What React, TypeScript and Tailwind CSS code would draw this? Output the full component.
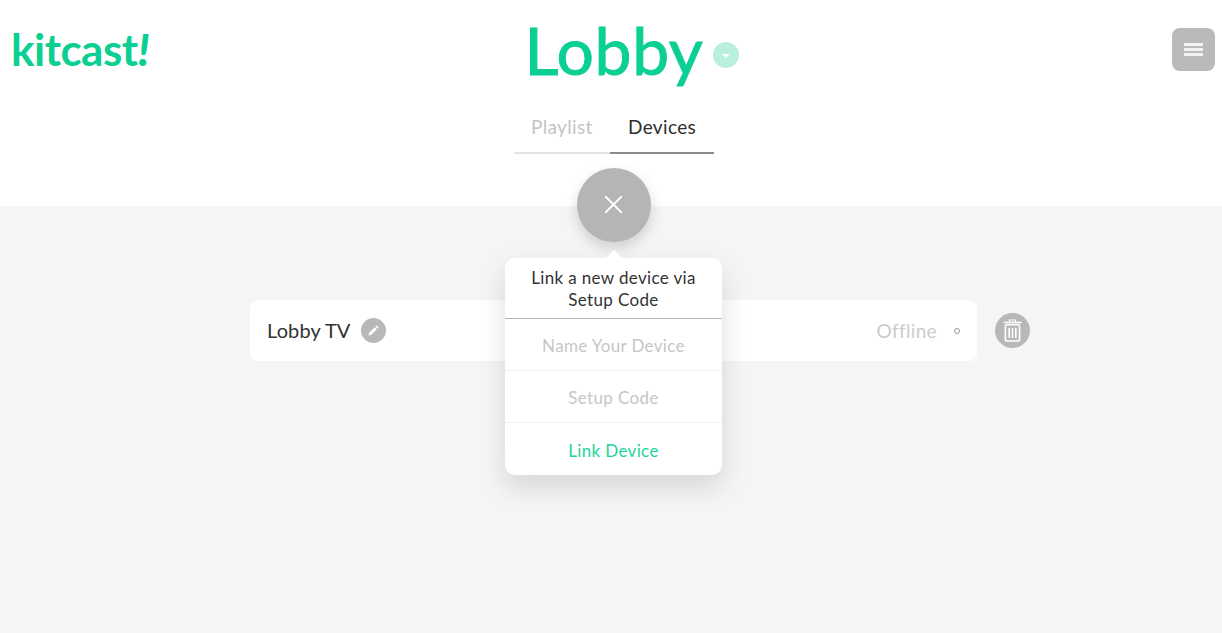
import { X } from 'lucide-react';

const font = { fontFamily: '"Lato", "Liberation Sans", sans-serif' };

function PencilIcon() {
  return (
    <svg width="13" height="13" viewBox="0 0 13 13" fill="white">
      <path d="M9.6 1.4 11.6 3.4 10.5 4.5 8.5 2.5Z" />
      <path d="M7.8 3.2 9.8 5.2 4 11 1.4 11.6 2 9Z" />
    </svg>
  );
}

function TrashIcon() {
  return (
    <svg width="21" height="25" viewBox="0 0 21 25" fill="none" stroke="white">
      <path d="M1.5 4.5h18" strokeWidth="1.6" />
      <path d="M7.5 4V2h6v2" strokeWidth="1.2" />
      <rect x="3.4" y="6.8" width="14.2" height="16.2" rx="1.5" strokeWidth="1.6" />
      <path d="M7.2 10v10M10.5 10v10M13.8 10v10" strokeWidth="1.6" />
    </svg>
  );
}

function PopoverRow({ label, className }: { label: string; className: string }) {
  return (
    <div className={`flex h-[52px] items-center justify-center pt-[3px] text-[17px] tracking-[0.35px] ${className}`}>
      {label}
    </div>
  );
}

export default function App() {
  return (
    <div className="relative flex h-[633px] flex-col overflow-hidden bg-white" style={font}>
      <header className="relative h-[206px] shrink-0 bg-white">
        <div className="flex items-start justify-between pl-[11px] pr-[7px]">
          <div className="mt-[21px] text-[44px] leading-[56px] font-bold tracking-[-0.5px] text-[#0bcf93]">
            kitcast<span className="font-black italic">!</span>
          </div>
          <button className="mt-[28px] flex h-[43px] w-[43px] flex-col items-center justify-center gap-[2.5px] rounded-lg bg-[#bababa]">
            <span className="h-[2.5px] w-[19px] bg-[#f2f2f2]" />
            <span className="h-[2.5px] w-[19px] bg-[#f2f2f2]" />
            <span className="h-[2.5px] w-[19px] bg-[#f2f2f2]" />
          </button>
        </div>
        <div className="absolute top-[10px] left-[514px] flex w-[200px] flex-col items-center">
          <div className="relative text-[66px] leading-[80px] font-normal tracking-[0.6px] text-[#0bcf93] [-webkit-text-stroke:1px_#0bcf93]">
            Lobby
            <span className="absolute top-[32px] left-[calc(100%+9px)] flex h-[26px] w-[26px] items-center justify-center rounded-full bg-[#b9f0dd]">
              <span className="mt-[1px] h-0 w-0 border-x-[4px] border-t-[4px] border-x-transparent border-t-white" />
            </span>
          </div>
          <div className="mt-[25px] flex w-full text-[19px] leading-[24px] tracking-[0.35px]">
            <div className="w-[96px] border-b-2 border-[#e3e3e3] pb-[13px] pl-[17px] text-[#c4c4c4]">Playlist</div>
            <div className="flex-1 border-b-2 border-[#8a8a8a] pb-[13px] pl-[18px] text-[#2e2e2e]">Devices</div>
          </div>
        </div>
      </header>

      <main className="flex-1 bg-[#f5f5f5] pt-[94px] pl-[250px]">
        <div className="flex items-center gap-[18px]">
          <div className="flex h-[61px] w-[727px] items-center justify-between rounded-lg bg-white pr-[17px] pl-[17px]">
            <div className="flex items-center gap-[10px] text-[20px] leading-[26px] tracking-[0.1px] text-[#333333]">
              <span className="-mt-[1px]">Lobby TV</span>
              <span className="flex h-[25px] w-[25px] items-center justify-center rounded-full bg-[#b8b8b8]">
                <PencilIcon />
              </span>
            </div>
            <div className="flex items-center gap-[17px] text-[19px] tracking-[0.35px] text-[#cccccc]">
              <span className="mt-[1px]">Offline</span>
              <span className="h-[6px] w-[6px] rounded-full border border-[#999999]" />
            </div>
          </div>
          <span className="flex h-[35px] w-[35px] items-center justify-center rounded-full bg-[#b8b8b8]">
            <TrashIcon />
          </span>
        </div>
      </main>

      <button className="absolute top-[168px] left-[577px] flex h-[74px] w-[74px] items-center justify-center rounded-full bg-[#b5b5b5] pb-[2px] pr-[1px] shadow-[0_6px_14px_rgba(0,0,0,0.16)]">
        <X size={31} color="white" strokeWidth={1.4} />
      </button>

      <div className="absolute top-[258px] left-[505px] w-[217px] rounded-[10px] bg-white shadow-[0_12px_28px_rgba(0,0,0,0.13)]">
        <div className="absolute -top-[8px] left-[100px] h-0 w-0 border-x-[9px] border-b-[9px] border-x-transparent border-b-white" />
        <div className="flex h-[61px] items-center justify-center border-b border-[#b4b4b4] pt-[2px] text-center text-[17px] leading-[22px] tracking-[0.35px] text-[#333333]">
          Link a new device via
          <br />
          Setup Code
        </div>
        <PopoverRow label="Name Your Device" className="border-b border-[#f0f0f0] text-[#c6c6c6]" />
        <PopoverRow label="Setup Code" className="border-b border-[#f0f0f0] text-[#c6c6c6]" />
        <PopoverRow label="Link Device" className="text-[#1fd49c]" />
      </div>
    </div>
  );
}
